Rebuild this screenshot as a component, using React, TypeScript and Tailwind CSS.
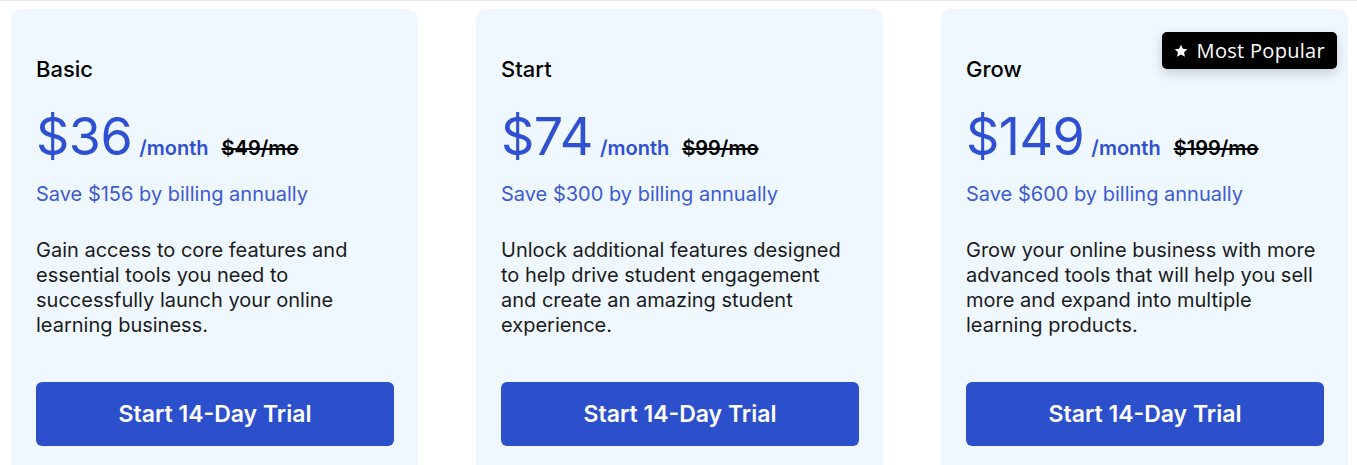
const PLANS = [
  {
    name: "Basic",
    price: "$36",
    was: "$49/mo",
    save: "Save $156 by billing annually",
    desc: "Gain access to core features and essential tools you need to successfully launch your online learning business.",
  },
  {
    name: "Start",
    price: "$74",
    was: "$99/mo",
    save: "Save $300 by billing annually",
    desc: "Unlock additional features designed to help drive student engagement and create an amazing student experience.",
  },
  {
    name: "Grow",
    price: "$149",
    was: "$199/mo",
    save: "Save $600 by billing annually",
    desc: "Grow your online business with more advanced tools that will help you sell more and expand into multiple learning products.",
    popular: true,
  },
]

function Star() {
  return (
    <svg viewBox="0 0 24 24" className="w-[16px] h-[16px] fill-white">
      <path d="M12 2.5l2.9 6.1 6.6.8-4.9 4.6 1.3 6.6L12 17.3l-5.9 3.3 1.3-6.6-4.9-4.6 6.6-.8z" />
    </svg>
  )
}

export default function App() {
  return (
    <div className="w-[1357px] h-[465px] overflow-hidden bg-white border-t border-[#e6e6e6] font-['Inter',sans-serif]">
      <div className="flex gap-[58px] pl-[11px] pt-[8px]">
        {PLANS.map(p => (
          <div key={p.name} className="relative w-[407px] h-[480px] shrink-0 bg-[#f0f8ff] rounded-[10px] px-[25px] pt-[46px]">
            {p.popular && (
              <div className="absolute right-[11px] top-[23px] flex items-center gap-[8px] bg-black text-white rounded-[5px] pl-[11px] pr-[12px] h-[37px] shadow-[0_4px_12px_rgba(0,0,0,0.18)] font-['Open_Sans',sans-serif] text-[20px] tracking-[0.3px]">
                <Star /> Most Popular
              </div>
            )}
            <h3 className="text-[22px] leading-[28px] font-medium text-black">{p.name}</h3>
            <div className="flex items-baseline mt-[24px] text-[#3050d2]">
              <span className="text-[52px] leading-[60px] font-normal tracking-[-0.5px]">{p.price}</span>
              <span className="ml-[7px] text-[20px] font-semibold">/month</span>
              <span className="ml-[13px] text-[20px] font-semibold text-black line-through">{p.was}</span>
            </div>
            <p className="mt-[14px] text-[20px] leading-[26px] text-[#3d5ad3]">{p.save}</p>
            <p className="mt-[31px] text-[20px] leading-[25px] text-[#1b1b1b] w-[358px]">{p.desc}</p>
            <button className="mt-[44px] w-[358px] h-[64px] rounded-[6px] bg-[#2c4fcc] text-white text-[23px] font-semibold">
              Start 14-Day Trial
            </button>
          </div>
        ))}
      </div>
    </div>
  )
}
